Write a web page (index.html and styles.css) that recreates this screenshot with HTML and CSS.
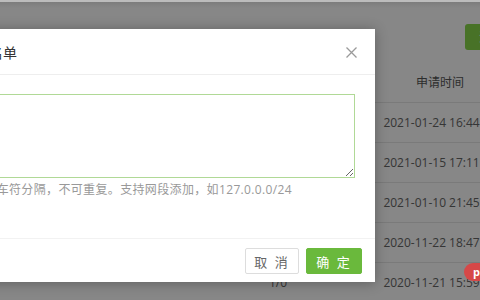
FILE: index.html
```html
<!DOCTYPE html>
<html lang="zh-CN">
  <head>
    <meta charset="UTF-8" />
    <meta name="viewport" content="width=device-width, initial-scale=1.0" />
    <title>白名单管理</title>
    <link rel="stylesheet" href="styles.css">
  </head>
  <body>
    <div class="top-edge"></div>

    <div class="page">
      <div class="toolbar">
        <button class="btn-add">添加</button>
      </div>

      <table class="list-table">
        <colgroup>
          <col class="col-ip" />
          <col class="col-note" />
          <col class="col-count" />
          <col class="col-gap" />
          <col class="col-time" />
          <col class="col-rest" />
        </colgroup>
        <thead>
          <tr>
            <th>IP地址</th>
            <th>备注</th>
            <th>使用次数</th>
            <th></th>
            <th>申请时间</th>
            <th></th>
          </tr>
        </thead>
        <tbody>
          <tr><td>192.168.1.10</td><td></td><td>3/0</td><td></td><td>2021-01-24 16:44:08</td><td></td></tr>
          <tr><td>192.168.1.22</td><td></td><td>2/0</td><td></td><td>2021-01-15 17:11:36</td><td></td></tr>
          <tr><td>10.0.0.0/24</td><td></td><td>5/1</td><td></td><td>2021-01-10 21:45:19</td><td></td></tr>
          <tr><td>172.16.3.8</td><td></td><td>1/0</td><td></td><td>2020-11-22 18:47:52</td><td></td></tr>
          <tr><td>127.0.0.1</td><td></td><td>1/0</td><td></td><td>2020-11-21 15:59:03</td><td></td></tr>
        </tbody>
      </table>
    </div>

    <!-- 弹窗遮罩 -->
    <div class="overlay"></div>

    <div class="dialog">
      <div class="dialog-header">
        <span class="dialog-title">添加白名单</span>
        <span class="dialog-close" aria-label="关闭">
          <svg width="11" height="11" viewBox="0 0 11 11">
            <path d="M0.5 0.5 L10.5 10.5 M10.5 0.5 L0.5 10.5" stroke="#9a9a9a" stroke-width="1.3" fill="none" />
          </svg>
        </span>
      </div>
      <div class="dialog-body">
        <textarea class="ip-input"></textarea>
        <p class="hint">多个IP以回车符分隔，不可重复。支持网段添加，如127.0.0.0/24</p>
      </div>
      <div class="dialog-footer">
        <button class="btn btn-cancel">取 消</button>
        <button class="btn btn-ok">确 定</button>
      </div>
    </div>

    <div class="badge">php</div>
  </body>
</html>
```

FILE: styles.css
```css
* {
  margin: 0;
  padding: 0;
  box-sizing: border-box;
}

html,
body {
  width: 480px;
  height: 300px;
  overflow: hidden;
}

body {
  position: relative;
  font-family: "Open Sans", "Noto Sans CJK SC", sans-serif;
  color: #333;
  background: #fff;
}

/* Page under the mask */
.page {
  width: 540px;
  padding-top: 24px;
}

.toolbar {
  display: flex;
  justify-content: flex-end;
  padding-right: 15px;
  height: 26px;
}

.btn-add {
  width: 60px;
  height: 26px;
  border: none;
  border-radius: 3px;
  background: #88d84a;
  color: #fff;
  font-family: inherit;
  font-size: 12px;
  text-align: left;
  padding-left: 14px;
}

.list-table {
  width: 690px;
  margin-top: 12px;
  margin-left: -150px;
  border-collapse: collapse;
  table-layout: fixed;
  font-size: 12px;
  color: #666;
}

.col-ip {
  width: 150px;
}

.col-note {
  width: 200px;
}

.col-count {
  width: 156px;
}

.col-gap {
  width: 9px;
}

.col-time {
  width: 150px;
}

.list-table th,
.list-table td {
  height: 40px;
  text-align: center;
  font-weight: 400;
  white-space: nowrap;
  border-bottom: 1px solid #e6e6e6;
}

.list-table th {
  color: #555;
}

/* Mask + dialog */
.overlay {
  position: absolute;
  inset: 0;
  background: rgba(0, 0, 0, 0.47);
}

.top-edge {
  position: absolute;
  top: 0;
  left: 0;
  right: 0;
  height: 8px;
  z-index: 5;
  background: linear-gradient(#bcbcbc 0, #bcbcbc 2px, rgba(0, 0, 0, 0.08) 2px, rgba(0, 0, 0, 0) 8px);
}

.dialog {
  position: absolute;
  top: 29px;
  left: -69px;
  width: 444px;
  background: #fff;
  box-shadow: 0 1px 12px rgba(0, 0, 0, 0.3);
  z-index: 10;
}

.dialog-header {
  display: flex;
  justify-content: space-between;
  align-items: center;
  height: 46px;
  padding: 0 18px 0 16px;
  border-bottom: 1px solid #eee;
}

.dialog-title {
  font-size: 14px;
  color: #333;
}

.dialog-close {
  display: flex;
  margin-top: 1px;
}

.dialog-body {
  padding: 19px 20px 39px 5px;
}

.ip-input {
  display: block;
  width: 100%;
  height: 84px;
  border: 1px solid #b0d996;
  outline: none;
  resize: vertical;
  font-family: inherit;
}

.hint {
  margin-top: 3px;
  font-size: 12px;
  line-height: 18px;
  letter-spacing: 0.35px;
  color: #999;
  white-space: nowrap;
}

.dialog-footer {
  display: flex;
  justify-content: flex-end;
  gap: 7px;
  padding: 9px 13px 8px;
  border-top: 1px solid #f2f2f2;
}

.btn {
  height: 26px;
  border-radius: 2px;
  font-family: inherit;
  font-size: 13px;
  letter-spacing: 2px;
}

.btn-cancel {
  width: 54px;
  background: #fff;
  border: 1px solid #ddd;
  color: #666;
}

.btn-ok {
  width: 56px;
  background: #6ab93c;
  border: 1px solid #6ab93c;
  color: #fff;
}

.badge {
  position: absolute;
  left: 464px;
  top: 263px;
  width: 44px;
  height: 18px;
  padding-left: 9px;
  border-radius: 9px;
  background: #d64848;
  color: #fff;
  font-size: 11px;
  font-weight: 700;
  line-height: 18px;
  z-index: 20;
}
```
